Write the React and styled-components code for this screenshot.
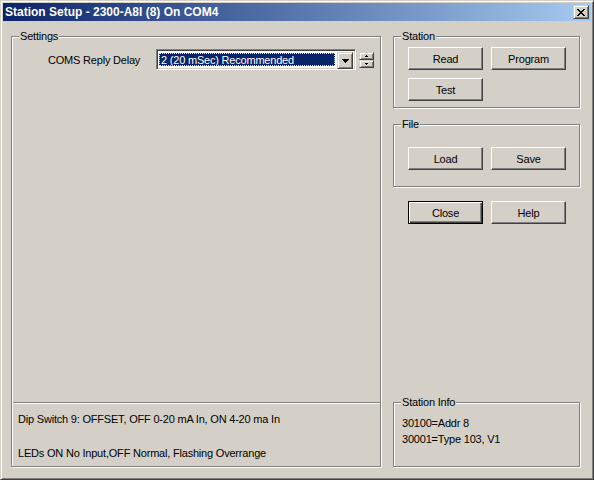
import React from "react";
import styled, { createGlobalStyle, css } from "styled-components";

const GlobalStyle = createGlobalStyle`
  html, body { margin: 0; padding: 0; background: #d4d0c8; }
  body {
    font-family: "Liberation Sans", Arial, sans-serif;
    font-size: 11px;
    letter-spacing: -0.2px;
    color: #000;
  }
  * { box-sizing: border-box; }
`;

const Window = styled.div`
  width: 594px;
  height: 480px;
  display: flex;
  flex-direction: column;
  padding: 2px;
  background: #d4d0c8;
  border: 1px solid;
  border-color: #d4d0c8 #404040 #404040 #d4d0c8;
  box-shadow: inset 1px 1px 0 #fff, inset -1px -1px 0 #808080;
`;

const TitleBar = styled.div`
  flex: none;
  height: 18px;
  display: flex;
  align-items: center;
  padding: 0 2px;
  background: linear-gradient(to right, #0a246a, #a6caf0);
  color: #fff;
  font-weight: bold;
  font-size: 12px;
  letter-spacing: 0;
`;

const TitleText = styled.span`
  line-height: 18px;
  white-space: nowrap;
`;

const raisedSmall = css`
  background: #d4d0c8;
  border: 1px solid;
  border-color: #d4d0c8 #404040 #404040 #d4d0c8;
  box-shadow: inset 1px 1px 0 #fff, inset -1px -1px 0 #808080;
`;

const CloseBox = styled.div`
  margin-left: auto;
  width: 16px;
  height: 14px;
  display: flex;
  align-items: center;
  justify-content: center;
  padding-right: 1px;
  ${raisedSmall}
`;

const Body = styled.div`
  flex: 1;
  display: flex;
  gap: 12px;
  padding: 15px 11px 10px 8px;
`;

const GroupBox = styled.div`
  position: relative;
  border: 1px solid #808080;
  box-shadow: inset 1px 1px 0 #fff, 1px 1px 0 #fff;
`;

const Caption = styled.span`
  position: absolute;
  top: -7px;
  left: 7px;
  padding: 0 1px;
  line-height: 13px;
  background: #d4d0c8;
  white-space: nowrap;
`;

const SettingsGroup = styled(GroupBox)`
  width: 370px;
  display: flex;
  flex-direction: column;
  padding-top: 12px;
`;

const DelayRow = styled.div`
  display: flex;
  align-items: center;
  padding-left: 36px;
`;

const Label = styled.span`
  width: 108px;
  white-space: nowrap;
`;

const Combo = styled.div`
  width: 200px;
  height: 21px;
  display: flex;
  padding: 2px;
  background: #fff;
  border: 1px solid;
  border-color: #808080 #fff #fff #808080;
  box-shadow: inset 1px 1px 0 #404040, inset -1px -1px 0 #d4d0c8;
`;

const Selected = styled.div`
  flex: 1;
  margin: 1px 2px 1px 0;
  display: flex;
  align-items: center;
  padding-left: 1px;
  background: #0a246a;
  color: #fff;
  border: 1px dotted #f5db95;
  white-space: nowrap;
  overflow: hidden;
`;

const DropButton = styled.div`
  width: 16px;
  height: 17px;
  display: flex;
  align-items: center;
  justify-content: center;
  ${raisedSmall}
`;

const Spinner = styled.div`
  margin-left: 3px;
  display: flex;
  flex-direction: column;
`;

const SpinButton = styled.div`
  width: 15px;
  height: 8px;
  display: flex;
  align-items: center;
  justify-content: center;
  ${raisedSmall}
`;

const Footer = styled.div`
  margin-top: auto;
  display: flex;
  flex-direction: column;
`;

const Separator = styled.div`
  height: 2px;
  margin-left: 1px;
  border-top: 1px solid #808080;
  border-bottom: 1px solid #fff;
`;

const Note = styled.div`
  padding-left: 6px;
  line-height: 14px;
  white-space: nowrap;
  margin-top: ${(p) => p.$gap}px;
`;

const RightColumn = styled.div`
  width: 187px;
  display: flex;
  flex-direction: column;
`;

const StationGroup = styled(GroupBox)`
  height: 72px;
  padding: 10px 0 0 14px;
  display: grid;
  grid-template-columns: 75px 75px;
  gap: 8px;
  align-content: start;
`;

const FileGroup = styled(GroupBox)`
  margin-top: 16px;
  height: 63px;
  padding: 22px 0 0 14px;
  display: flex;
  gap: 8px;
  align-items: flex-start;
`;

const ButtonRow = styled.div`
  margin-top: 14px;
  padding-left: 15px;
  display: flex;
  gap: 8px;
`;

const InfoGroup = styled(GroupBox)`
  margin-top: auto;
  height: 65px;
  padding: 12px 0 0 8px;
  line-height: 16px;
`;

const Button = styled.button`
  width: 75px;
  height: 23px;
  padding: 0;
  font-family: inherit;
  font-size: 11px;
  letter-spacing: -0.2px;
  color: #000;
  background: #d4d0c8;
  border: 1px solid;
  border-color: #fff #404040 #404040 #fff;
  box-shadow: inset -1px -1px 0 #808080, inset 1px 1px 0 #d4d0c8;
  ${(p) =>
    p.$default &&
    css`
      border-color: #000;
      box-shadow: inset 1px 1px 0 #fff, inset -1px -1px 0 #404040,
        inset -2px -2px 0 #808080;
    `}
`;

const CloseGlyph = () => (
  <svg width="8" height="7" viewBox="0 0 8 7" shapeRendering="crispEdges">
    <path
      fill="#000"
      d="M0 0h2v1H0zM6 0h2v1H6zM1 1h2v1H1zM5 1h2v1H5zM2 2h4v1H2zM3 3h2v1H3zM2 4h4v1H2zM1 5h2v1H1zM5 5h2v1H5zM0 6h2v1H0zM6 6h2v1H6z"
    />
  </svg>
);

const DownArrow = () => (
  <svg width="7" height="4" viewBox="0 0 7 4" shapeRendering="crispEdges">
    <path fill="#000" d="M0 0h7v1H0zM1 1h5v1H1zM2 2h3v1H2zM3 3h1v1H3z" />
  </svg>
);

const TinyArrow = ({ up }) => (
  <svg width="3" height="2" viewBox="0 0 3 2" shapeRendering="crispEdges">
    <path
      fill="#000"
      d={up ? "M1 0h1v1H1zM0 1h3v1H0z" : "M0 0h3v1H0zM1 1h1v1H1z"}
    />
  </svg>
);

export default function App() {
  return (
    <>
      <GlobalStyle />
      <Window>
        <TitleBar>
          <TitleText>Station Setup - 2300-A8I (8) On COM4</TitleText>
          <CloseBox>
            <CloseGlyph />
          </CloseBox>
        </TitleBar>
        <Body>
          <SettingsGroup>
            <Caption>Settings</Caption>
            <DelayRow>
              <Label>COMS Reply Delay</Label>
              <Combo>
                <Selected>2 (20 mSec) Recommended</Selected>
                <DropButton>
                  <DownArrow />
                </DropButton>
              </Combo>
              <Spinner>
                <SpinButton>
                  <TinyArrow up />
                </SpinButton>
                <SpinButton>
                  <TinyArrow />
                </SpinButton>
              </Spinner>
            </DelayRow>
            <Footer>
              <Separator />
              <Note $gap={8}>Dip Switch 9: OFFSET, OFF 0-20 mA In, ON 4-20 ma In</Note>
              <Note $gap={20}>LEDs ON No Input,OFF Normal, Flashing Overrange</Note>
              <Note $gap={6} />
            </Footer>
          </SettingsGroup>
          <RightColumn>
            <StationGroup>
              <Caption>Station</Caption>
              <Button>Read</Button>
              <Button>Program</Button>
              <Button>Test</Button>
            </StationGroup>
            <FileGroup>
              <Caption>File</Caption>
              <Button>Load</Button>
              <Button>Save</Button>
            </FileGroup>
            <ButtonRow>
              <Button $default>Close</Button>
              <Button>Help</Button>
            </ButtonRow>
            <InfoGroup>
              <Caption>Station Info</Caption>
              <div>30100=Addr 8</div>
              <div>30001=Type 103, V1</div>
            </InfoGroup>
          </RightColumn>
        </Body>
      </Window>
    </>
  );
}
